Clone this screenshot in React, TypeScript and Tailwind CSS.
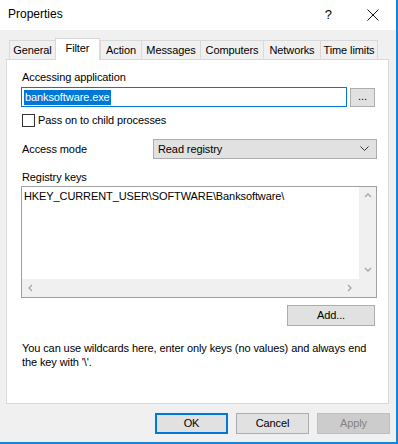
import React from "react";

const tabs = [
  { label: "General", w: "w-[46px]" },
  { label: "Filter", w: "w-[45px]", active: true },
  { label: "Action", w: "w-[41px]" },
  { label: "Messages", w: "w-[59px]" },
  { label: "Computers", w: "w-[63px]" },
  { label: "Networks", w: "w-[57px]" },
  { label: "Time limits", w: "w-[58px]" },
];

function Tab({ label, w, active }: { label: string; w: string; active?: boolean }) {
  if (active) {
    return (
      <div
        className={`${w} h-[22px] bg-white border border-b-0 border-[#d9d9d9] -mb-px relative z-10 flex items-center justify-center pb-[3px] whitespace-nowrap`}
      >
        {label}
      </div>
    );
  }
  return (
    <div
      className={`${w} h-[19px] bg-[#f0f0f0] border-t border-l border-[#d9d9d9] last:border-r flex items-center justify-center whitespace-nowrap`}
    >
      {label}
    </div>
  );
}

function Arrow({ dir }: { dir: "up" | "down" | "left" | "right" }) {
  const pts = {
    up: "1,5 4,2 7,5",
    down: "1,2 4,5 7,2",
    left: "5,1 2,4 5,7",
    right: "2,1 5,4 2,7",
  }[dir];
  return (
    <svg width="8" height="8" viewBox="0 0 8 8">
      <polyline points={pts} fill="none" stroke="#a6a6a6" strokeWidth="1.3" />
    </svg>
  );
}

function DialogButton({
  children,
  kind = "normal",
}: {
  children: React.ReactNode;
  kind?: "normal" | "default" | "disabled";
}) {
  const cls =
    kind === "default"
      ? "border-2 border-[#0078d7] bg-[#e1e1e1] text-black"
      : kind === "disabled"
        ? "border border-[#bfbfbf] bg-[#cccccc] text-[#838383]"
        : "border border-[#adadad] bg-[#e1e1e1] text-black";
  return (
    <div className={`w-[73px] h-[21px] flex items-center justify-center ${cls}`}>
      {children}
    </div>
  );
}

export default function App() {
  return (
    <div className="w-[398px] h-[444px] bg-[#f0f0f0] border-r-2 border-b-2 border-[#1883d7] flex flex-col font-['Liberation_Sans',Arial,sans-serif] text-[11px] tracking-[-0.1px] leading-[15px] text-black overflow-hidden">
      {/* title bar */}
      <div className="h-[30px] bg-white flex items-center pl-[8px] shrink-0 tracking-normal">
        <span className="flex-1 text-[12px] pb-[1px]">Properties</span>
        <span className="mr-[35px] text-[13px] pb-[1px]">?</span>
        <svg width="12" height="12" viewBox="0 0 12 12" className="mr-[17px]">
          <path d="M0.5 0.5L11.5 11.5M11.5 0.5L0.5 11.5" stroke="#111" strokeWidth="1" />
        </svg>
      </div>

      {/* tabs */}
      <div className="flex items-end pl-[9px] pt-[8px] shrink-0">
        {tabs.map((t) => (
          <Tab key={t.label} {...t} />
        ))}
      </div>

      {/* panel */}
      <div className="ml-[6px] w-[383px] h-[345px] bg-white border border-[#d9d9d9] pl-[14px] pt-[10px] flex flex-col shrink-0">
        <div className="pl-[1px]">Accessing application</div>
        <div className="flex items-start mt-[2px]">
          <div className="w-[326px] h-[20px] border border-[#0078d7] flex items-center pl-[2px]">
            <span className="bg-[#0078d7] text-white h-[15px] px-[1px] leading-[15px]">
              banksoftware.exe
            </span>
          </div>
          <div className="ml-[3px] mt-[1px] w-[25px] h-[19px] bg-[#e1e1e1] border border-[#adadad] flex items-center justify-center pb-[2px]">
            ...
          </div>
        </div>

        <div className="flex items-center mt-[6px] pl-[1px]">
          <div className="w-[13px] h-[13px] border border-[#333] bg-white" />
          <span className="ml-[3px]">Pass on to child processes</span>
        </div>

        <div className="flex items-center mt-[11px]">
          <span className="pl-[1px] w-[132px]">Access mode</span>
          <div className="w-[224px] h-[20px] bg-[#e1e1e1] border border-[#adadad] flex items-center pl-[4px] pr-[7px]">
            <span className="flex-1">Read registry</span>
            <svg width="9" height="6" viewBox="0 0 9 6">
              <polyline points="0.5,0.5 4.5,4.5 8.5,0.5" fill="none" stroke="#333" strokeWidth="1" />
            </svg>
          </div>
        </div>

        <div className="pl-[1px] mt-[11px]">Registry keys</div>
        <div className="mt-[1px] w-[356px] h-[112px] border border-[#a0a0a0] flex flex-col">
          <div className="flex flex-1 min-h-0">
            <div className="flex-1 pl-[2px] pt-[2px]">HKEY_CURRENT_USER\SOFTWARE\Banksoftware\</div>
            <div className="w-[17px] bg-[#f0f0f0] flex flex-col items-center justify-between py-[5px]">
              <Arrow dir="up" />
              <Arrow dir="down" />
            </div>
          </div>
          <div className="h-[18px] flex">
            <div className="flex-1 bg-[#f0f0f0] flex items-center justify-between px-[5px]">
              <Arrow dir="left" />
              <Arrow dir="right" />
            </div>
            <div className="w-[17px] bg-[#f0f0f0]" />
          </div>
        </div>

        <div className="flex justify-end w-[354px] mt-[7px]">
          <div className="w-[88px] h-[21px] bg-[#e1e1e1] border border-[#adadad] flex items-center justify-center">
            Add...
          </div>
        </div>

        <p className="pl-[1px] mt-[15px] leading-[14px] whitespace-nowrap">
          You can use wildcards here, enter only keys (no values) and always end
          <br />
          the key with '\'.
        </p>
      </div>

      {/* buttons */}
      <div className="flex gap-[8px] pl-[155px] pt-[9px]">
        <DialogButton kind="default">OK</DialogButton>
        <DialogButton>Cancel</DialogButton>
        <DialogButton kind="disabled">Apply</DialogButton>
      </div>
    </div>
  );
}
